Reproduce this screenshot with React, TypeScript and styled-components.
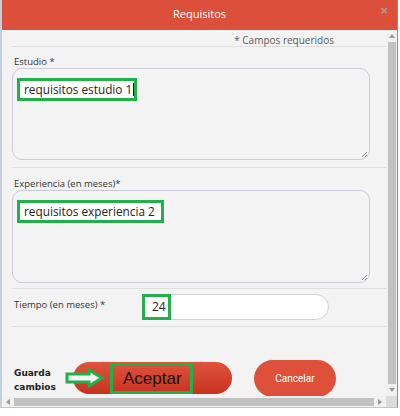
import React from "react";
import styled, { createGlobalStyle } from "styled-components";

const GlobalStyle = createGlobalStyle`
	* { box-sizing: border-box; }
	body {
		margin: 0;
		background: #ffffff;
		font-family: "Open Sans", "DejaVu Sans", sans-serif;
	}
`;

const Window = styled.div`
	width: 398px;
	height: 408px;
	display: flex;
	flex-direction: column;
	border-left: 2px solid #c4cfdc;
	border-right: 1px solid #8a8aa0;
	border-bottom: 1px solid #b7c9de;
	background-color: #f3f3f3;
	overflow: hidden;
`;

const TitleBar = styled.div`
	position: relative;
	height: 30px;
	flex: none;
	background-color: #dc4f3a;
	color: #ffffff;
	font-size: 11px;
	display: flex;
	align-items: center;
	justify-content: center;
	padding-bottom: 3px;
`;

const Close = styled.span`
	position: absolute;
	right: 8px;
	top: 4px;
	color: #a9a1a8;
	font-family: "DejaVu Sans", sans-serif;
	font-size: 11px;
	font-weight: bold;
`;

const Viewport = styled.div`
	flex: 1;
	display: flex;
	min-height: 0;
`;

const Content = styled.div`
	flex: 1;
	display: flex;
	flex-direction: column;
	padding-left: 10px;
	overflow: hidden;
`;

const Required = styled.div`
	height: 17px;
	padding: 3px 52px 0 0;
	text-align: right;
	font-size: 10px;
	color: #5a5a5a;
	border-bottom: 1px solid #dedede;
`;

const Section = styled.div<{ $top: number; $bottom: number }>`
	padding: ${(p) => p.$top}px 16px ${(p) => p.$bottom}px 0;
	border-bottom: 1px solid #dedede;
`;

const Label = styled.div`
	height: 13px;
	font-size: 9.5px;
	color: #333333;
	padding-left: 2px;
`;

const TextArea = styled.div<{ $height: number }>`
	position: relative;
	height: ${(p) => p.$height}px;
	border: 1px solid #c9ccd8;
	border-radius: 10px;
	padding: 8px 0 0 4px;
	background-color: #f4f4f4;
`;

const Grip = styled.svg`
	position: absolute;
	right: 1px;
	bottom: 1px;
`;

const Highlight = styled.span<{ $pad: number }>`
	display: inline-block;
	border: 3px solid #22b04a;
	background-color: #ffffff;
	padding: 0 ${(p) => p.$pad}px 0 4px;
	height: 23px;
	line-height: 17px;
	font-size: 11.8px;
	color: #222222;
`;

const Caret = styled.span`
	display: inline-block;
	width: 1px;
	height: 13px;
	margin-left: 1px;
	vertical-align: -2px;
	background-color: #111111;
`;

const Row = styled.div`
	height: 38px;
	display: flex;
	align-items: center;
	border-bottom: 1px solid #dedede;
	padding-bottom: 2px;
`;

const RowLabel = styled(Label)`
	width: 131px;
	height: auto;
	margin-top: -4px;
`;

const Input = styled.div`
	width: 186px;
	height: 26px;
	border: 1px solid #cfd2d8;
	border-radius: 13px;
	background-color: #ffffff;
	display: flex;
	align-items: center;
`;

const SmallHighlight = styled(Highlight)`
	height: 26px;
	line-height: 20px;
	font-size: 12px;
	padding: 0 2px 0 7px;
	margin-left: -2px;
`;

const Footer = styled.div`
	flex: 1;
	display: flex;
	align-items: flex-end;
`;

const SaveText = styled.div`
	width: 58px;
	font-family: "DejaVu Sans", sans-serif;
	font-weight: bold;
	font-size: 9px;
	line-height: 14px;
	color: #222222;
	margin: 0 0 2px 2px;
`;

const AcceptButton = styled.div`
	position: relative;
	width: 159px;
	height: 32px;
	margin: 0 0 2px 1px;
	border-radius: 16px;
	background: linear-gradient(#e0533c, #c7321f);
	display: flex;
	align-items: center;
	padding-left: 37px;
`;

const Arrow = styled.svg`
	position: absolute;
	left: -8px;
	top: 6px;
`;

const AcceptLabel = styled.span`
	display: inline-block;
	border: 3px solid #22b04a;
	height: 31px;
	width: 83px;
	font-family: "Liberation Sans", Arial, sans-serif;
	font-size: 17px;
	line-height: 25px;
	padding-left: 10px;
	color: #1a0f0c;
`;

const CancelButton = styled.div`
	width: 82px;
	height: 37px;
	margin-left: 22px;
	border-radius: 19px;
	background-color: #de5039;
	color: #ffffff;
	font-family: Roboto, sans-serif;
	font-size: 10px;
	display: flex;
	align-items: center;
	justify-content: center;
	margin-bottom: -1px;
`;

const VScroll = styled.div`
	width: 11px;
	flex: none;
	display: flex;
	flex-direction: column;
	align-items: center;
	background-color: #f1f1f1;
	padding: 0 1px;
`;

const ArrowBox = styled.div`
	height: 12px;
	width: 100%;
	display: flex;
	align-items: center;
	justify-content: center;
	flex: none;
`;

const VThumb = styled.div`
	flex: 1;
	width: 8px;
	background-color: #c1c1c1;
`;

const HRow = styled.div`
	height: 11px;
	flex: none;
	display: flex;
	background-color: #f1f1f1;
`;

const HTrack = styled.div`
	flex: 1;
	display: flex;
	align-items: center;
	padding: 1px 0;
`;

const HThumb = styled.div`
	flex: 1;
	height: 8px;
	background-color: #c1c1c1;
`;

const HArrow = styled.div`
	width: 12px;
	flex: none;
	display: flex;
	align-items: center;
	justify-content: center;
`;

const Corner = styled.div`
	width: 11px;
	flex: none;
	background-color: #dcdcdc;
`;

const ResizeGrip = () => (
	<Grip width="7" height="7" viewBox="0 0 7 7">
		<path d="M6 1 L1 6 M6 4 L4 6" stroke="#8a8a8a" strokeWidth="1" />
	</Grip>
);

const Tri = ({ d }: { d: string }) => (
	<svg width="6" height="6" viewBox="0 0 6 6">
		<path d={d} fill="#9a9a9a" />
	</svg>
);

const App = () => {
	return (
		<>
			<GlobalStyle />
			<Window>
				<TitleBar>
					Requisitos
					<Close>×</Close>
				</TitleBar>
				<Viewport>
					<Content>
						<Required>* Campos requeridos</Required>
						<Section $top={8} $bottom={7}>
							<Label>Estudio *</Label>
							<TextArea $height={92}>
								<Highlight $pad={0}>
									requisitos estudio 1<Caret />
								</Highlight>
								<ResizeGrip />
							</TextArea>
						</Section>
						<Section $top={9} $bottom={5}>
							<Label>Experiencia (en meses)*</Label>
							<TextArea $height={93}>
								<Highlight $pad={6}>requisitos experiencia 2</Highlight>
								<ResizeGrip />
							</TextArea>
						</Section>
						<Row>
							<RowLabel>Tiempo (en meses) *</RowLabel>
							<Input>
								<SmallHighlight $pad={2}>24</SmallHighlight>
							</Input>
						</Row>
						<Footer>
							<SaveText>
								Guarda
								<br />
								cambios
							</SaveText>
							<AcceptButton>
								<Arrow width="40" height="20" viewBox="0 0 40 20">
									<path
										d="M2 6 H24 V2 L37 10 L24 18 V14 H2 Z"
										fill="#f3f3f3"
										stroke="#22b04a"
										strokeWidth="3"
										strokeLinejoin="miter"
									/>
								</Arrow>
								<AcceptLabel>Aceptar</AcceptLabel>
							</AcceptButton>
							<CancelButton>Cancelar</CancelButton>
						</Footer>
					</Content>
					<VScroll>
						<ArrowBox>
							<Tri d="M0 5 L3 1 L6 5 Z" />
						</ArrowBox>
						<VThumb />
						<ArrowBox>
							<Tri d="M0 1 L3 5 L6 1 Z" />
						</ArrowBox>
					</VScroll>
				</Viewport>
				<HRow>
					<HTrack>
						<HArrow>
							<Tri d="M5 0 L1 3 L5 6 Z" />
						</HArrow>
						<HThumb />
						<HArrow>
							<Tri d="M1 0 L5 3 L1 6 Z" />
						</HArrow>
					</HTrack>
					<Corner />
				</HRow>
			</Window>
		</>
	);
};

export default App;
